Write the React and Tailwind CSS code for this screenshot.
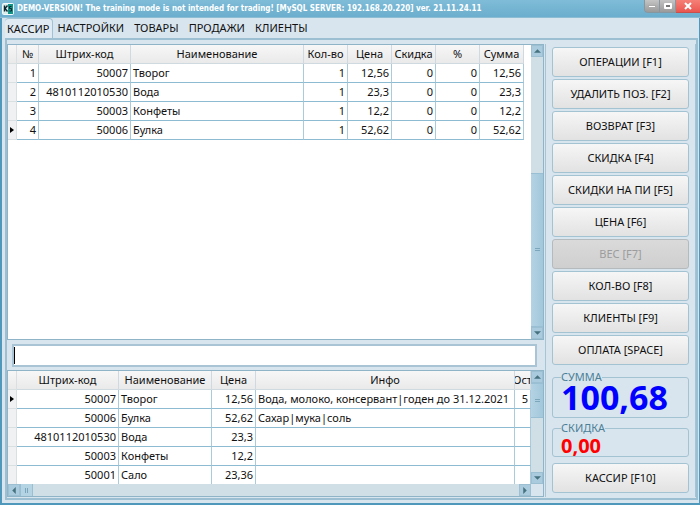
import clsx from 'clsx'

const TABS = ['КАССИР', 'НАСТРОЙКИ', 'ТОВАРЫ', 'ПРОДАЖИ', 'КЛИЕНТЫ']

const ACTIONS = [
  { label: 'ОПЕРАЦИИ [F1]' },
  { label: 'УДАЛИТЬ ПОЗ. [F2]' },
  { label: 'ВОЗВРАТ [F3]' },
  { label: 'СКИДКА [F4]' },
  { label: 'СКИДКИ НА ПИ [F5]' },
  { label: 'ЦЕНА [F6]' },
  { label: 'ВЕС [F7]', disabled: true },
  { label: 'КОЛ-ВО [F8]' },
  { label: 'КЛИЕНТЫ [F9]' },
  { label: 'ОПЛАТА [SPACE]' },
]

const RECEIPT_COLUMNS = [
  { label: '№', width: 'w-[22px]' },
  { label: 'Штрих-код', width: 'w-[92px]' },
  { label: 'Наименование', width: '', left: true },
  { label: 'Кол-во', width: 'w-[44px]' },
  { label: 'Цена', width: 'w-[44px]' },
  { label: 'Скидка', width: 'w-[44px]' },
  { label: '%', width: 'w-[44px]' },
  { label: 'Сумма', width: 'w-[44px]' },
]

const RECEIPT_ROWS = [
  ['1', '50007', 'Творог', '1', '12,56', '0', '0', '12,56'],
  ['2', '4810112010530', 'Вода', '1', '23,3', '0', '0', '23,3'],
  ['3', '50003', 'Конфеты', '1', '12,2', '0', '0', '12,2'],
  ['4', '50006', 'Булка', '1', '52,62', '0', '0', '52,62'],
]

const STOCK_COLUMNS = [
  { label: 'Штрих-код', width: 'w-[102px]' },
  { label: 'Наименование', width: 'w-[93px]', left: true },
  { label: 'Цена', width: 'w-[44px]' },
  { label: 'Инфо', width: '', left: true },
  { label: 'Ост', width: 'w-[16px]' },
]

const STOCK_ROWS = [
  ['50007', 'Творог', '12,56', 'Вода, молоко, консервант|годен до 31.12.2021', '5'],
  ['50006', 'Булка', '52,62', 'Сахар|мука|соль', ''],
  ['4810112010530', 'Вода', '23,3', '', ''],
  ['50003', 'Конфеты', '12,2', '', ''],
  ['50001', 'Сало', '23,36', '', ''],
]

function Logo() {
  return (
    <svg viewBox="0 0 12 12" className="w-3 h-3 flex-shrink-0" aria-hidden="true">
      <rect width="12" height="12" rx="2" fill="#f4fafa" />
      <rect x="1" y="1" width="5" height="10" fill="#d8ecec" />
      <rect x="6" y="1" width="5" height="10" fill="#0f9488" />
      <path d="M2.5 2.5v6M5.5 2.5L3 5.5l2.5 3" stroke="#0a2730" strokeWidth="1.4" fill="none" />
      <path d="M9.5 3.5H7.5v2h2v2.5h-2" stroke="#0a2730" strokeWidth="1" fill="none" />
    </svg>
  )
}

function Arrow({ dir }) {
  const points = {
    up: '3,0 6,3 0,3',
    down: '0,0 6,0 3,3',
    left: '3,0 3,6 0,3',
    right: '0,0 3,3 0,6',
  }
  const vertical = dir === 'up' || dir === 'down'
  return (
    <svg
      viewBox={vertical ? '0 0 6 3' : '0 0 3 6'}
      className={vertical ? 'w-[7px] h-1' : 'w-1 h-[7px]'}
      aria-hidden="true"
    >
      <polygon points={points[dir]} fill="#46717f" />
    </svg>
  )
}

function ScrollButton({ dir, label }) {
  return (
    <button
      type="button"
      aria-label={label}
      className="flex items-center justify-center w-3 h-3 flex-shrink-0 bg-[#a9cbdd] border border-[#9cc0d2]"
    >
      <Arrow dir={dir} />
    </button>
  )
}

function Titlebar() {
  return (
    <header className="flex items-center h-[18px] pl-[2px] gap-[3px] bg-linear-to-b from-[#7fbcd8] to-[#6baecd] border-b border-[#8dbdd3]">
      <Logo />
      <h1 className="flex-1 truncate text-[8px] leading-3 font-bold text-white font-['DejaVu_Sans_Condensed','DejaVu_Sans',sans-serif]">
        DEMO-VERSION! The training mode is not intended for trading! [MySQL SERVER: 192.168.20.220] ver. 21.11.24.11
      </h1>
      <div className="flex self-start h-[13px]">
        <button type="button" aria-label="Свернуть" className="flex items-center justify-center w-4 bg-linear-to-b from-[#c4c4c4] to-[#9a9a9a] border-x border-b border-[#8797a0] rounded-bl-sm">
          <span className="w-2 h-[3px] bg-white border border-[#aaa]" />
        </button>
        <button type="button" aria-label="Развернуть" className="flex items-center justify-center w-4 bg-linear-to-b from-[#c4c4c4] to-[#9a9a9a] border-r border-b border-[#8797a0]">
          <span className="w-2 h-[6px] border-2 border-white bg-[#777] rounded-[1px]" />
        </button>
        <button type="button" aria-label="Закрыть" className="flex items-center justify-center w-6 bg-linear-to-b from-[#f58077] to-[#ea5650] border-b border-[#c7504c]">
          <svg viewBox="0 0 8 8" className="w-2 h-2" aria-hidden="true">
            <path d="M1 1l6 6M7 1L1 7" stroke="#fff" strokeWidth="2" />
          </svg>
        </button>
      </div>
    </header>
  )
}

function TabBar() {
  return (
    <nav className="flex h-5 text-[11px] leading-5 text-[#111]" role="tablist">
      {TABS.map((tab, i) => (
        <button
          key={tab}
          type="button"
          role="tab"
          aria-selected={i === 0}
          className={clsx(
            'whitespace-nowrap',
            i === 0
              ? 'px-[2px] rounded-t-sm border-t border-r border-[#9fc2d4] bg-[#dfeaf2]'
              : 'px-[5px]'
          )}
        >
          {tab}
        </button>
      ))}
    </nav>
  )
}

function DataGrid({ label, columns, rows, current }) {
  return (
    <table aria-label={label} className="w-full table-fixed border-separate border-spacing-0 text-[11px] leading-[18px] text-[#111]">
      <colgroup>
        <col className="w-[9px]" />
        {columns.map((c) => (
          <col key={c.label} className={c.width} />
        ))}
      </colgroup>
      <thead>
        <tr className="bg-linear-to-b from-[#f7f7f7] to-[#e9e9e9]">
          <th className="p-0 border-r border-b border-[#dadfe2]" />
          {columns.map((c) => (
            <th key={c.label} scope="col" className="h-[19px] p-0 font-normal border-r border-b border-[#cfdae0] overflow-hidden">
              <div className="flex justify-center overflow-hidden">{c.label}</div>
            </th>
          ))}
        </tr>
      </thead>
      <tbody>
        {rows.map((row, r) => (
          <tr key={row.join()} className="h-[19px]">
            <td className="p-0 bg-[#f0f1f2] border-r border-b border-[#dadfe2]">
              {r === current && (
                <svg viewBox="0 0 4 6" className="w-1 h-[6px] mx-auto" aria-hidden="true">
                  <polygon points="0,0 4,3 0,6" fill="#000" />
                </svg>
              )}
            </td>
            {row.map((value, i) => (
              <td
                key={columns[i].label}
                className={clsx(
                  'px-[2px] py-0 whitespace-nowrap overflow-hidden border-r border-b border-r-[#a9cbdc] border-b-[#8dbbd2]',
                  columns[i].left ? 'text-left' : 'text-right'
                )}
              >
                {value}
              </td>
            ))}
          </tr>
        ))}
      </tbody>
    </table>
  )
}

function VerticalScroll({ before, thumb, after }) {
  return (
    <div className="flex flex-col w-3 flex-shrink-0 bg-[#d0dfe5]">
      <ScrollButton dir="up" label="Вверх" />
      <div className={before} />
      <div className={clsx('flex items-center justify-center bg-linear-to-r from-[#b4d3e3] to-[#a2c7db] border-y border-[#98bfd3]', thumb)}>
        <span className="w-[5px] h-[3px] border-y border-[#7ba6bb]" />
      </div>
      <div className={after} />
      <ScrollButton dir="down" label="Вниз" />
    </div>
  )
}

function HorizontalScroll() {
  return (
    <div className="flex h-3 bg-[#d0dfe5] mr-3">
      <ScrollButton dir="left" label="Влево" />
      <div className="flex items-center justify-center w-[13px] bg-[#b4d3e3] border-x border-[#98bfd3]">
        <span className="w-[3px] h-[5px] border-x border-[#7ba6bb]" />
      </div>
      <div className="flex-1" />
      <ScrollButton dir="right" label="Вправо" />
    </div>
  )
}

function ActionButton({ label, disabled }) {
  return (
    <button
      type="button"
      disabled={disabled}
      className="h-[30px] rounded-[3px] border border-[#a3c3d3] bg-linear-to-b from-[#f6f6f6] to-[#e2e2e2] text-[11px] leading-4 text-[#111] whitespace-nowrap disabled:from-[#dadada] disabled:to-[#cfcfcf] disabled:border-[#b5babd] disabled:text-[#9c9c9c]"
    >
      {label}
    </button>
  )
}

function Total({ label, value, className }) {
  return (
    <fieldset className="min-w-0 px-2 rounded-[3px] border border-[#a3c3d3]">
      <legend className="text-[11px] leading-4 text-[#4d8096]">{label}</legend>
      <output className={clsx('block font-bold', className)}>{value}</output>
    </fieldset>
  )
}

export default function App() {
  return (
    <div className="flex flex-col min-h-screen bg-[#d8e5ee] font-['Noto_Sans',sans-serif]">
      <Titlebar />
      <div className="flex flex-col flex-1 pl-[3px] pr-px pb-[3px] border-l-2 border-r border-b-2 border-[#4f97bb]">
        <TabBar />
        <main className="flex flex-1 gap-px pt-1 pb-px border-2 border-[#9cbfd2]">
          <div className="flex flex-col flex-1 min-w-0">
            <section className="flex flex-1 min-h-[280px] border border-[#8fb4c8] bg-white">
              <div className="flex-1 min-w-0 pr-[7px]">
                <DataGrid label="Чек" columns={RECEIPT_COLUMNS} rows={RECEIPT_ROWS} current={3} />
              </div>
              <VerticalScroll before="flex-[117]" thumb="flex-[154]" after="" />
            </section>
            <div className="pl-[5px] pr-[7px] pt-1 pb-[3px]">
              <div className="relative">
                <input
                  type="text"
                  aria-label="Поиск товара"
                  autoFocus
                  className="block w-full h-[23px] px-1 border-2 border-[#a9c5d5] bg-white text-[11px] caret-transparent outline-none"
                />
                {/* Caret */}
                <span className="absolute left-[2px] inset-y-[3px] w-px bg-black" />
              </div>
            </div>
            <section className="flex border border-[#8fb4c8] bg-[#d8e5ee]">
              <div className="flex flex-col flex-1 min-w-0">
                <div className="flex h-[113px] overflow-hidden bg-white">
                  <div className="flex-1 min-w-0">
                    <DataGrid label="Товары" columns={STOCK_COLUMNS} rows={STOCK_ROWS} current={0} />
                  </div>
                  <VerticalScroll before="" thumb="h-[35px]" after="flex-1" />
                </div>
                <HorizontalScroll />
              </div>
            </section>
          </div>
          <aside className="flex flex-col gap-[2px] w-[151px] pt-[3px] px-[6px] border-x border-[#a5c4d6]">
            {ACTIONS.map((action) => (
              <ActionButton key={action.label} {...action} />
            ))}
            <div className="flex flex-col gap-[2px] pt-[2px] pb-1">
              <Total label="СУММА" value="100,68" className="pb-2 text-[34px] leading-6 text-[#0000ff]" />
              <Total label="СКИДКА" value="0,00" className="text-xl leading-5 text-[#ff0000]" />
            </div>
            <ActionButton label="КАССИР [F10]" />
          </aside>
        </main>
      </div>
    </div>
  )
}
